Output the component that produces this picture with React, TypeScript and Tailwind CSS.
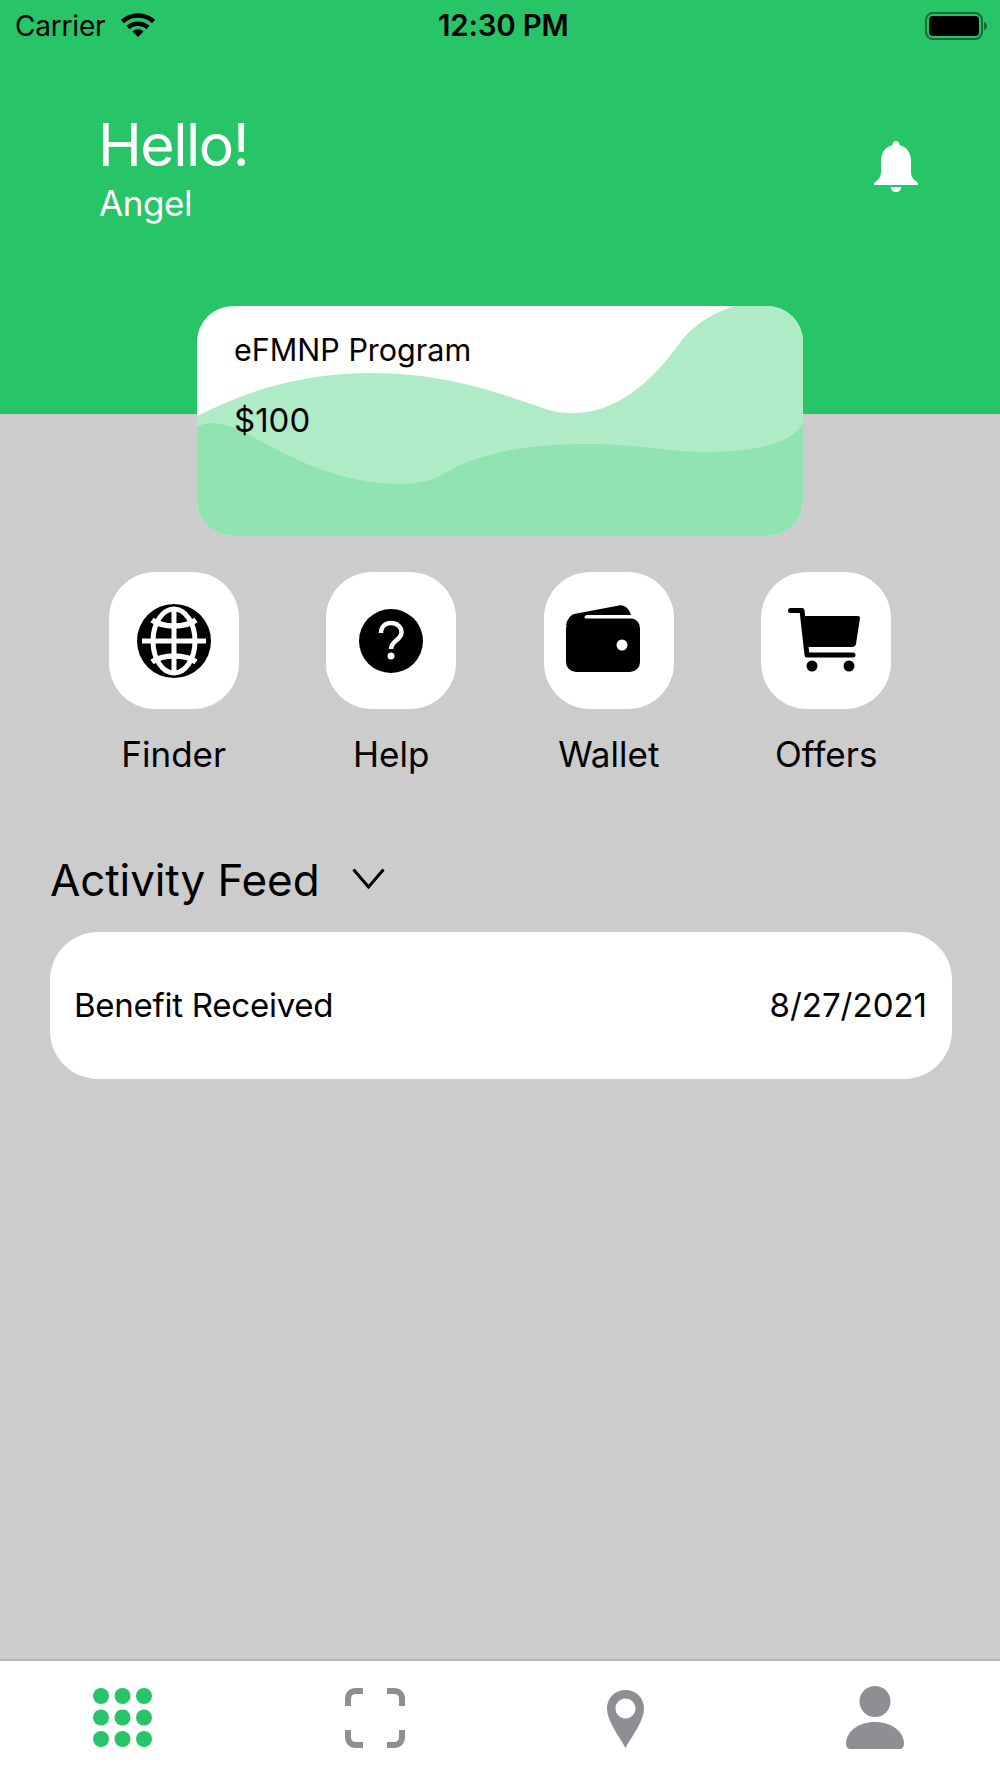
const actions = [
  { label: "Finder", icon: <GlobeIcon /> },
  { label: "Help", icon: <HelpIcon /> },
  { label: "Wallet", icon: <span className="mb-[4px] mr-[12px]"><WalletIcon /></span> },
  { label: "Offers", icon: <span className="mb-[2px] mr-[5px]"><CartIcon /></span> },
];

function WifiIcon() {
  return (
    <svg width="34" height="24" viewBox="0 0 34 24">
      <path d="M1.500 8.500C10 0.500 24 0.500 32.500 8.500" fill="none" stroke="#000" strokeWidth="4.500" />
      <path d="M7 14.500C12.500 9.500 21.500 9.500 27 14.500" fill="none" stroke="#000" strokeWidth="4.500" />
      <path d="M11.500 18.500C14.500 15.600 19.500 15.600 22.500 18.500L17 24Z" fill="#000" />
    </svg>
  );
}

function BatteryIcon() {
  return (
    <svg width="62" height="28" viewBox="0 0 62 28">
      <rect x="1" y="1" width="56" height="26" rx="7" fill="none" stroke="#000" strokeOpacity="0.45" strokeWidth="2" />
      <rect x="4" y="4" width="50" height="20" rx="4" fill="#000" />
      <path d="M59 10C61 10.500 62 12 62 14C62 16 61 17.500 59 18Z" fill="#000" fillOpacity="0.45" />
    </svg>
  );
}

function BellIcon() {
  return (
    <svg width="44" height="51" viewBox="0 0 44 51">
      <path d="M22 0C24.500 0 25.500 2 25.500 4C33 6 37 12 37 20V31C37 36 40 39 44 42V44H0V42C4 39 7 36 7 31V20C7 12 11 6 18.500 4C18.500 2 19.500 0 22 0Z" fill="#fff" />
      <path d="M16.500 46H27.500C27 49 25 51 22 51C19 51 17 49 16.500 46Z" fill="#fff" />
    </svg>
  );
}

function GlobeIcon() {
  return (
    <svg width="74" height="74" viewBox="0 0 74 74">
      <circle cx="37" cy="37" r="37" fill="#000" />
      <g fill="none" stroke="#fff" strokeWidth="5">
        <path d="M5 37H69" />
        <path d="M37 6V68" />
        <ellipse cx="37" cy="37" rx="21" ry="32" />
        <path d="M15 16C26 24 48 24 59 16" strokeWidth="5.500" />
        <path d="M15 58C26 50 48 50 59 58" strokeWidth="5.500" />
      </g>
    </svg>
  );
}

function HelpIcon() {
  return (
    <svg width="64" height="64" viewBox="0 0 64 64">
      <circle cx="32" cy="32" r="32" fill="#000" />
      <path d="M22 24C22 17.500 26.500 14 32 14C38 14 42.500 18 42.500 23.500C42.500 31 32 31.500 32 40" fill="none" stroke="#fff" strokeWidth="4.500" />
      <circle cx="32" cy="47" r="3.500" fill="#fff" />
    </svg>
  );
}

function WalletIcon() {
  return (
    <svg width="74" height="67" viewBox="0 0 74 67">
      <path d="M8 9L53 0.500C58 -0.500 63 3 65 10H16C10 10 5 11 3 14C3 12 5 10 8 9Z" fill="#000" />
      <rect x="0" y="13" width="74" height="54" rx="10" fill="#000" />
      <path d="M0 22C0 14 6 9 12 9L20 9V20H0Z" fill="#000" />
      <path d="M20 12H68" stroke="#fff" strokeWidth="3" strokeLinecap="round" fill="none" />
      <circle cx="56" cy="40" r="5.500" fill="#fff" />
    </svg>
  );
}

function CartIcon() {
  return (
    <svg width="72" height="64" viewBox="0 0 72 64">
      <path d="M2.500 2.500H14L19 47H65" fill="none" stroke="#000" strokeWidth="5" strokeLinecap="round" strokeLinejoin="round" />
      <path d="M13 8H70C71.500 8 72 9 72 10L68 36C67.500 38 66 39 64 39H18Z" fill="#000" />
      <circle cx="24" cy="58" r="5.500" fill="#000" />
      <circle cx="61" cy="58" r="5.500" fill="#000" />
    </svg>
  );
}

function ChevronIcon() {
  return (
    <svg width="33" height="21" viewBox="0 0 33 21">
      <path d="M1.500 1.500L16.500 19L31.500 1.500" fill="none" stroke="#000" strokeWidth="3" />
    </svg>
  );
}

function GridIcon() {
  const spots = [8, 29.5, 51];
  return (
    <svg width="59" height="59" viewBox="0 0 59 59">
      {spots.map((y) => spots.map((x) => <circle key={`${x}-${y}`} cx={x} cy={y} r="8" fill="#27c468" />))}
    </svg>
  );
}

function ScanIcon() {
  return (
    <svg width="60" height="60" viewBox="0 0 60 60">
      <g fill="none" stroke="#8e8e93" strokeWidth="6">
        <path d="M18 3H11C6 3 3 6 3 11V18" />
        <path d="M42 3H49C54 3 57 6 57 11V18" />
        <path d="M18 57H11C6 57 3 54 3 49V42" />
        <path d="M42 57H49C54 57 57 54 57 49V42" />
      </g>
    </svg>
  );
}

function PinIcon() {
  return (
    <svg width="37" height="58" viewBox="0 0 37 58">
      <path fillRule="evenodd" d="M18.500 0C29 0 37 8 37 18.500C37 31 25 46 18.500 58C12 46 0 31 0 18.500C0 8 8 0 18.500 0ZM18.500 8.500C13 8.500 8.500 13 8.500 18.500C8.500 24 13 28.500 18.500 28.500C24 28.500 28.500 24 28.500 18.500C28.500 13 24 8.500 18.500 8.500Z" fill="#8e8e93" />
    </svg>
  );
}

function UserIcon() {
  return (
    <svg width="58" height="63" viewBox="0 0 58 63">
      <circle cx="29" cy="15.500" r="15.500" fill="#8e8e93" />
      <path d="M0 58C0 45 13 36 29 36C45 36 58 45 58 58C58 61 56 63 54 63H4C2 63 0 61 0 58Z" fill="#8e8e93" />
    </svg>
  );
}

function CardWaves() {
  return (
    <svg className="absolute inset-0" width="606" height="230" viewBox="0 0 606 230">
      <path d="M0 110C55 82 110 67 175 67C250 67 305 88 352 104C405 118 450 84 485 34C500 16 518 6 538 0H606V230H0Z" fill="#b0ebc7" />
      <path d="M0 121C5 117 20 115 35 121C70 135 125 178 203 178C225 178 238 173 248 167C285 145 335 138 391 138C440 138 470 146 512 146C565 146 598 135 606 116V230H0Z" fill="#91e3b1" />
    </svg>
  );
}

export default function App() {
  return (
    <div className="flex h-[1778px] w-[1000px] flex-col overflow-hidden bg-[#cccccc] font-['Inter',sans-serif] text-black">
      <header className="h-[414px] bg-[#27c468]">
        <div className="relative flex h-[50px] items-center px-[15px] pt-[1px]">
          <span className="text-[28px] tracking-[-0.2px]">Carrier</span>
          <span className="ml-[16px] -mt-[2px]"><WifiIcon /></span>
          <span className="absolute left-[438px] text-[29.500px] font-semibold tracking-[-0.2px]">12:30 PM</span>
          <span className="ml-auto mr-[-2px]"><BatteryIcon /></span>
        </div>
        <div className="flex items-start justify-between pl-[98px] pr-[82px] pt-[60px]">
          <div>
            <div className="text-[59px] leading-[70px] tracking-[-1.500px] text-white">Hello!</div>
            <div className="mt-[3px] pl-[1px] text-[35px] leading-[40px] tracking-[-0.4px] text-white">Angel</div>
          </div>
          <div className="pt-[31px]"><BellIcon /></div>
        </div>
      </header>

      <main className="flex flex-1 flex-col">
        <section className="relative z-10 mx-auto -mt-[108px] h-[230px] w-[606px] overflow-hidden rounded-[36px] bg-white">
          <CardWaves />
          <div className="relative pl-[37px] pt-[26px]">
            <div className="text-[30.500px] leading-[36px]">eFMNP Program</div>
            <div className="mt-[33px] text-[33px] leading-[38px]">$100</div>
          </div>
        </section>

        <section className="mt-[36px] grid grid-cols-4 px-[65px]">
          {actions.map((action) => (
            <div key={action.label} className="flex flex-col items-center">
              <div className="flex h-[137px] w-[130px] items-center justify-center rounded-[46px] bg-white">{action.icon}</div>
              <div className="mt-[25px] text-[35px] leading-[40px]">{action.label}</div>
            </div>
          ))}
        </section>

        <section className="mt-[79px] pl-[50px] pr-[48px]">
          <div className="flex items-center">
            <span className="text-[44px] leading-[54px] tracking-[-0.1px]">Activity Feed</span>
            <span className="ml-[33px] -mt-[3px]"><ChevronIcon /></span>
          </div>
          <div className="mt-[25px] flex h-[147px] items-center justify-between rounded-[48px] bg-white pl-[24px] pr-[25px]">
            <span className="text-[33px] tracking-[-0.25px]">Benefit Received</span>
            <span className="text-[33px]">8/27/2021</span>
          </div>
        </section>
      </main>

      <nav className="grid h-[119px] grid-cols-4 border-t-2 border-[#b8b8b8] bg-white pt-[27px]">
        <div className="flex justify-center"><span className="mr-[5px]"><GridIcon /></span></div>
        <div className="flex justify-center"><ScanIcon /></div>
        <div className="flex justify-center"><span className="mt-[2px]"><PinIcon /></span></div>
        <div className="flex justify-center"><span className="-mt-[2px]"><UserIcon /></span></div>
      </nav>
    </div>
  );
}
